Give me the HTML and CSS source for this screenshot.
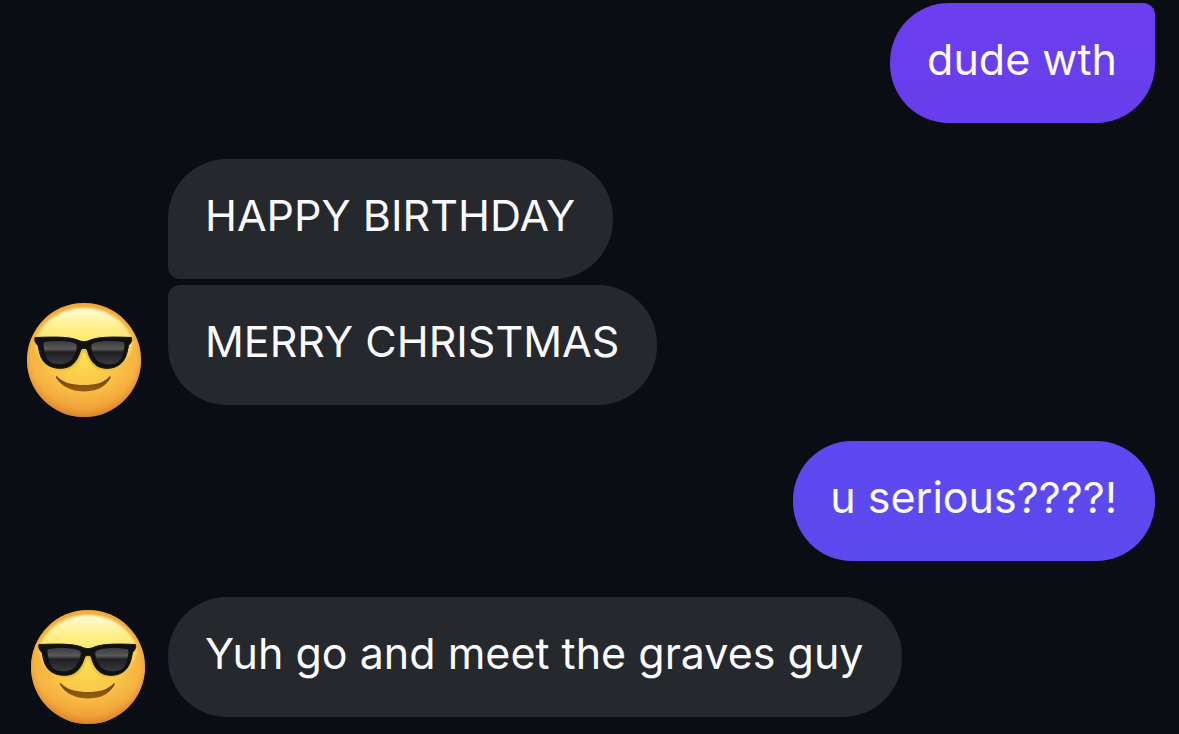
FILE: index.html
```html
<!DOCTYPE html>
<html lang="en">
<head>
  <meta charset="utf-8">
  <meta name="viewport" content="width=device-width, initial-scale=1">
  <title>Chat</title>
  <link rel="stylesheet" href="styles.css">
</head>
<body>
  <svg class="defs" width="0" height="0" aria-hidden="true">
    <defs>
      <linearGradient id="face" x1="0" y1="0" x2="0" y2="1">
        <stop offset="0" stop-color="#eea633"/>
        <stop offset="0.3" stop-color="#f8be42"/>
        <stop offset="0.65" stop-color="#f9bc47"/>
        <stop offset="1" stop-color="#ec942e"/>
      </linearGradient>
      <radialGradient id="glow" cx="0.5" cy="0.46" r="0.54">
        <stop offset="0" stop-color="#fddc4e"/>
        <stop offset="0.5" stop-color="#fbcb4b" stop-opacity="0.85"/>
        <stop offset="0.85" stop-color="#f4ab3f" stop-opacity="0.45"/>
        <stop offset="1" stop-color="#d07c22" stop-opacity="0.7"/>
      </radialGradient>
      <linearGradient id="shine" x1="0" y1="0" x2="0" y2="1">
        <stop offset="0" stop-color="#fffbd8"/>
        <stop offset="0.25" stop-color="#fff59a" stop-opacity="0.95"/>
        <stop offset="0.55" stop-color="#ffef70" stop-opacity="0.75"/>
        <stop offset="1" stop-color="#ffe34f" stop-opacity="0"/>
      </linearGradient>
      <linearGradient id="lens" x1="0" y1="0" x2="0" y2="1">
        <stop offset="0" stop-color="#3c3c3e"/>
        <stop offset="0.34" stop-color="#59595b"/>
        <stop offset="0.48" stop-color="#1f1f21"/>
        <stop offset="1" stop-color="#3b3b3d"/>
      </linearGradient>
      <linearGradient id="mouth" x1="0" y1="0" x2="0" y2="1">
        <stop offset="0" stop-color="#654009"/>
        <stop offset="1" stop-color="#9a5f13"/>
      </linearGradient>
      <filter id="soft" x="-10%" y="-10%" width="120%" height="120%">
        <feGaussianBlur stdDeviation="1"/>
      </filter>
      <symbol id="cool" viewBox="0 0 114 114">
        <circle cx="57" cy="57" r="57" fill="url(#face)"/>
        <circle cx="57" cy="57" r="57" fill="url(#glow)"/>
        <path d="M9 35C17 17 35 5 57 5s40 12 48 30c2 14-4 35-48 35S7 49 9 35Z" fill="url(#shine)" filter="url(#soft)"/>
        <path d="M10 40C24 37 43 37 57 42c14-5 33-5 47-2-3 4-5 5-6 9-3 12-10 18-20 18-11 0-17-9-20-18h-2c-3 9-9 18-20 18-10 0-18-5-20-18-1-4-3-5-6-9Z" fill="#a9700f" opacity="0.3" filter="url(#soft)"/>
        <path d="M8 34.500C24 34 43 33 53 38q4 1.500 8 0C71 33 90 34 104.500 34.500c1 3-1 6-3 8-1 5-2 11-5 15-5 7-13 8.500-20 7.500-9-1-14-9-16-17.500-1-3-6-3-7 0C51 56 46 64 37 65c-7 1-16-.5-21-7.500-3-4-4-10-5-15C9 41 7 37 8 34.500Z" fill="#11110f" stroke="#11110f" stroke-linejoin="round"/>
        <path d="M18 39c10-1.500 21-1.500 29 1 3 1 3 3 2.500 5.500C48 53 44 60 36 61c-7 1-12 0-15.500-4.500C18 53 17 47 16.500 42c0-2 .3-2.700 1.500-3Z" fill="url(#lens)"/>
        <path d="M96 39c-10-1.500-21-1.500-29 1-3 1-3 3-2.500 5.500C66 53 70 60 78 61c7 1 12 0 15.500-4.500C96 53 97 47 97.500 42c0-2-.3-2.700-1.500-3Z" fill="url(#lens)"/>
        <path d="M29.500 73C36 80 46 82 57 82s20-2 26-9q1.500 1 0 3C77 85 68 88.500 57 88.500S35 84 30 76q-2-2.500-.5-3Z" fill="url(#mouth)"/>
      </symbol>
    </defs>
  </svg>

  <main class="chat">
    <section class="group group-sent">
      <p class="bubble bubble-violet bubble-last">dude wth</p>
    </section>

    <section class="group group-received">
      <svg class="avatar" role="img" aria-label="Smiling face with sunglasses"><use href="#cool"/></svg>
      <div class="stack">
        <p class="bubble bubble-top">HAPPY BIRTHDAY</p>
        <p class="bubble bubble-bottom">MERRY CHRISTMAS</p>
      </div>
    </section>

    <section class="group group-sent">
      <p class="bubble bubble-indigo">u serious????!</p>
    </section>

    <section class="group group-received group-single">
      <svg class="avatar" role="img" aria-label="Smiling face with sunglasses"><use href="#cool"/></svg>
      <div class="stack">
        <p class="bubble">Yuh go and meet the graves guy</p>
      </div>
    </section>
  </main>
</body>
</html>
```

FILE: styles.css
```css
* {
  box-sizing: border-box;
}

body {
  margin: 0;
  background: #0a0d14;
  color: #fafafc;
  font-family: Inter, "Liberation Sans", sans-serif;
  font-size: 43px;
  line-height: 56px;
}

.defs {
  display: block;
}

.chat {
  display: flex;
  flex-direction: column;
  gap: 36px;
  padding: 3px 24px 17px 0;
}

.group {
  display: flex;
  align-items: flex-end;
}

.group-sent {
  justify-content: flex-end;
}

.group-received {
  gap: 27px;
  padding-left: 27px;
}

.group-single {
  gap: 23px;
  padding-left: 31px;
}

.avatar {
  flex: none;
  width: 114px;
  height: 114px;
  margin-bottom: -12px;
}

.group-single .avatar {
  margin-bottom: -7px;
}

.stack {
  display: flex;
  flex-direction: column;
  align-items: flex-start;
  gap: 6px;
}

.bubble {
  margin: 0;
  padding: 28px 38px 36px 37px;
  border-radius: 59px;
  background: #25282d;
}

.bubble-top {
  border-bottom-left-radius: 12px;
}

.bubble-bottom {
  border-top-left-radius: 12px;
}

.bubble-last {
  border-top-right-radius: 12px;
}

.bubble-violet {
  background: linear-gradient(#6c3eee, #673eeb);
}

.bubble-indigo {
  background: linear-gradient(#5e48f0, #5b4aed);
}
```
